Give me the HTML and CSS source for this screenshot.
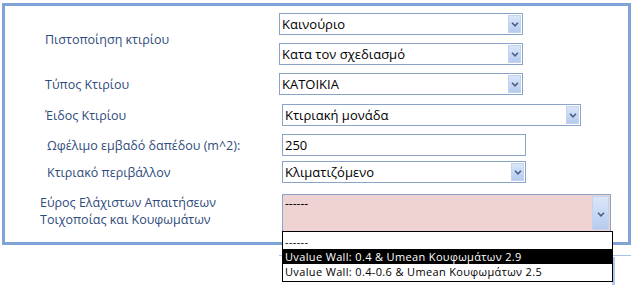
FILE: index.html
```html
<!DOCTYPE html>
<html lang="el">
<head>
<meta charset="utf-8">
<title>Κτίριο</title>
<link rel="stylesheet" href="styles.css">
</head>
<body>
<div class="frame">
  <div class="row r1">
    <div class="label l40">Πιστοποίηση κτιρίου</div>
    <div class="stack">
      <div class="select w244"><span class="val">Καινούριο</span><span class="btn"><svg viewBox="0 0 8 5" width="8" height="5"><path d="M1 0.8 L4 3.8 L7 0.8" fill="none" stroke="#4b5f86" stroke-width="1.6"/></svg></span></div>
      <div class="select w244"><span class="val">Κατα τον σχεδιασμό</span><span class="btn"><svg viewBox="0 0 8 5" width="8" height="5"><path d="M1 0.8 L4 3.8 L7 0.8" fill="none" stroke="#4b5f86" stroke-width="1.6"/></svg></span></div>
    </div>
  </div>
  <div class="row r2">
    <div class="label l40">Τύπος Κτιρίου</div>
    <div class="select w244"><span class="val">ΚΑΤΟΙΚΙΑ</span><span class="btn"><svg viewBox="0 0 8 5" width="8" height="5"><path d="M1 0.8 L4 3.8 L7 0.8" fill="none" stroke="#4b5f86" stroke-width="1.6"/></svg></span></div>
  </div>
  <div class="row r3">
    <div class="label l40">Έιδος Κτιρίου</div>
    <div class="select w299 shift"><span class="val">Κτιριακή μονάδα</span><span class="btn"><svg viewBox="0 0 8 5" width="8" height="5"><path d="M1 0.8 L4 3.8 L7 0.8" fill="none" stroke="#4b5f86" stroke-width="1.6"/></svg></span></div>
  </div>
  <div class="row r4">
    <div class="label l42">Ωφέλιμο εμβαδό δαπέδου (m^2):</div>
    <div class="input w244 shift">250</div>
  </div>
  <div class="row r5">
    <div class="label l42">Κτιριακό περιβάλλον</div>
    <div class="select w244 shift"><span class="val">Κλιματιζόμενο</span><span class="btn"><svg viewBox="0 0 8 5" width="8" height="5"><path d="M1 0.8 L4 3.8 L7 0.8" fill="none" stroke="#4b5f86" stroke-width="1.6"/></svg></span></div>
  </div>
  <div class="row r6">
    <div class="label l35">Εύρος Ελάχιστων Απαιτήσεων<br>Τοιχοποίας και Κουφωμάτων</div>
    <div class="select tall w329 shift"><span class="val">------</span><span class="btn wide"><svg viewBox="0 0 8 5" width="8" height="5"><path d="M1 0.8 L4 3.8 L7 0.8" fill="none" stroke="#4b5f86" stroke-width="1.6"/></svg></span>
      <div class="list">
        <div class="opt">------</div>
        <div class="opt sel">Uvalue Wall: 0.4 &amp; Umean Κουφωμάτων 2.9</div>
        <div class="opt">Uvalue Wall: 0.4-0.6 &amp; Umean Κουφωμάτων 2.5</div>
      </div>
    </div>
  </div>
</div>
<div class="next"><div class="next-edge"></div></div>
</body>
</html>
```
FILE: styles.css
```css
html, body {
  margin: 0;
  padding: 0;
  background: #ffffff;
  overflow: hidden;
}
body {
  width: 635px;
  height: 285px;
  font-family: "Open Sans", "Noto Sans", sans-serif;
  font-size: 13px;
}
.frame {
  box-sizing: border-box;
  width: 629px;
  margin: 3px 0 0 2px;
  border: 3px solid #7fa3d7;
  padding: 7px 0 10px 0;
  display: flex;
  flex-direction: column;
}
.row {
  display: flex;
  align-items: center;
}
.r2, .r4 { margin-top: 8px; }
.r3 { margin-top: 9px; }
.r5 { margin-top: 5px; }
.r6 { margin-top: 11px; align-items: flex-start; }
.label {
  box-sizing: border-box;
  width: 274px;
  flex: none;
  color: #2f4b7c;
  font-size: 12.5px;
  line-height: 17px;
}
.l40 { padding-left: 40px; }
.l42 { padding-left: 42px; }
.l35 { padding-left: 35px; }
.stack {
  display: flex;
  flex-direction: column;
  gap: 8px;
}
.select, .input {
  box-sizing: border-box;
  height: 22px;
  border: 1px solid #8aa4c8;
  background: #ffffff;
  color: #000000;
  display: flex;
  align-items: center;
  font-size: 13px;
  position: relative;
}
.shift { margin-left: 3px; }
.w244 { width: 244px; }
.w299 { width: 299px; }
.w329 { width: 329px; }
.val {
  flex: 1;
  padding-left: 2px;
  white-space: nowrap;
  line-height: 18px;
}
.input { padding-left: 2px; }
.btn {
  box-sizing: border-box;
  width: 13px;
  height: 18px;
  margin-right: 1px;
  border: 1px solid #c3d3ee;
  background: linear-gradient(#dae6f9, #b6cbef);
  display: flex;
  align-items: center;
  justify-content: center;
}
.tall {
  height: 38px;
  background: #efd3d3;
  align-items: stretch;
}
.tall .val {
  line-height: 15px;
  padding-top: 1px;
  font-size: 12px;
}
.tall .btn {
  width: 17px;
  height: auto;
  margin: 1px 1px 1px 0;
  padding-top: 2px;
}
.list {
  position: absolute;
  top: 100%;
  left: -1px;
  width: 331px;
  box-sizing: border-box;
  border: 1px solid #000000;
  background: #ffffff;
  padding: 2px 0 2px 0;
  z-index: 2;
  font-size: 11px;
  letter-spacing: 0.35px;
}
.opt {
  height: 15px;
  line-height: 15px;
  padding-left: 2px;
  white-space: nowrap;
  color: #000000;
}
.opt.sel {
  background: #000000;
  color: #ffffff;
}
.next {
  box-sizing: border-box;
  width: 352px;
  height: 40px;
  margin: 10px 0 0 279px;
  border-top: 1px solid #a9c0e4;
  padding-top: 1px;
}
.next-edge {
  width: 3px;
  height: 30px;
  margin-left: 333px;
  background: #b3c9ec;
}
```
